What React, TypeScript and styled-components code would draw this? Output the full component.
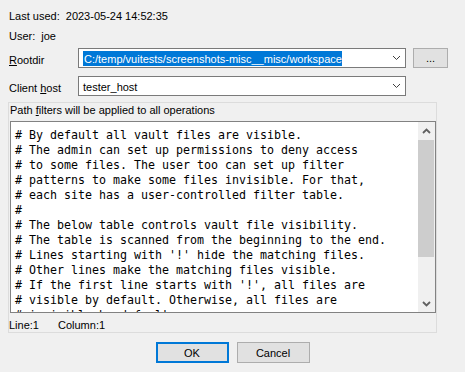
import React from "react";
import styled, { createGlobalStyle } from "styled-components";

const Global = createGlobalStyle`
  html, body { margin: 0; padding: 0; background: #f0f0f0; }
  body { font-family: "Liberation Sans", Arial, sans-serif; font-size: 11px; color: #000; }
`;

const Dialog = styled.div`
  width: 465px;
  height: 372px;
  box-sizing: border-box;
  padding: 6px 0 0 8px;
  display: flex;
  flex-direction: column;
  background: #f0f0f0;
`;

const InfoRow = styled.div`
  height: 20px;
  line-height: 20px;
  padding-left: 1px;
  display: flex;
  gap: 6px;
  white-space: nowrap;
`;

const FieldRow = styled.div<{ $mt: number }>`
  margin-top: ${(p) => p.$mt}px;
  height: 20px;
  display: flex;
  align-items: center;
`;

const FieldLabel = styled.label`
  width: 70px;
  padding-left: 1px;
  line-height: 20px;
  padding-top: 2px;
  box-sizing: border-box;
  height: 20px;
  white-space: nowrap;
`;

const U = styled.span`
  text-decoration: underline;
  text-underline-offset: 1px;
`;

const Combo = styled.div`
  width: 328px;
  height: 20px;
  box-sizing: border-box;
  border: 1px solid #7a7a7a;
  background: #fff;
  display: flex;
  align-items: center;
  padding-left: 4px;
  position: relative;
`;

const ComboText = styled.span<{ $selected?: boolean }>`
  line-height: 15px;
  height: 15px;
  padding-top: 1px;
  box-sizing: border-box;
  display: inline-block;
  white-space: nowrap;
  background: ${(p) => (p.$selected ? "#0078d7" : "transparent")};
  color: ${(p) => (p.$selected ? "#fff" : "#000")};
  padding-left: ${(p) => (p.$selected ? "1px" : "0")};
`;

const ComboArrow = styled.span`
  margin-left: auto;
  width: 17px;
  display: flex;
  align-items: center;
  justify-content: center;
  height: 100%;
`;

const SmallButton = styled.button`
  margin-left: 7px;
  width: 35px;
  height: 20px;
  box-sizing: border-box;
  border: 1px solid #adadad;
  background: #e1e1e1;
  font-family: inherit;
  font-size: 11px;
  padding: 0;
  color: #000;
  line-height: 18px;
`;

const Panel = styled.div`
  margin-top: 6px;
  width: 429px;
  height: 231px;
  box-sizing: border-box;
  border: 1px solid #dcdcdc;
  display: flex;
  flex-direction: column;
`;

const PanelLabel = styled.div`
  height: 18px;
  line-height: 15px;
  padding: 0 0 3px 1px;
  box-sizing: border-box;
  white-space: nowrap;
`;

const Editor = styled.div`
  margin-left: 1px;
  height: 192px;
  flex: none;
  box-sizing: border-box;
  border: 1px solid #828282;
  background: #fff;
  display: flex;
  overflow: hidden;
`;

const Code = styled.pre`
  margin: 0;
  flex: 1;
  padding: 5.5px 0 0 4px;
  font-family: "DejaVu Sans Mono", "Liberation Mono", monospace;
  font-size: 11.63px;
  line-height: 15px;
  color: #000;
  overflow: hidden;
  white-space: pre;
`;

const ScrollBar = styled.div`
  width: 17px;
  background: #f0f0f0;
  display: flex;
  flex-direction: column;
`;

const ScrollArrow = styled.div`
  height: 17px;
  display: flex;
  align-items: center;
  justify-content: center;
`;

const ScrollTrack = styled.div`
  flex: 1;
  display: flex;
  flex-direction: column;
  padding: 1px 1px 0 0;
`;

const Thumb = styled.div`
  height: 117px;
  background: #cdcdcd;
`;

const StatusBar = styled.div`
  height: 19px;
  padding: 6px 0 0 0;
  box-sizing: border-box;
  line-height: 13px;
  display: flex;
  white-space: nowrap;
`;

const StatusCell = styled.span<{ $w: number }>`
  width: ${(p) => p.$w}px;
`;

const ButtonRow = styled.div`
  margin-top: 9px;
  margin-left: -8px;
  display: flex;
  justify-content: center;
  gap: 8px;
`;

const DialogButton = styled.button<{ $default?: boolean }>`
  width: 73px;
  height: 21px;
  box-sizing: border-box;
  border: ${(p) => (p.$default ? "2px solid #0078d7" : "1px solid #adadad")};
  background: #e1e1e1;
  font-family: inherit;
  font-size: 11px;
  color: #000;
  padding: 0;
`;

const Chevron = ({ bold }: { bold?: boolean }) => (
  <svg width="9" height="6" viewBox="0 0 9 6">
    <polyline
      points="1,1 4.5,4.5 8,1"
      fill="none"
      stroke={bold ? "#606060" : "#404040"}
      strokeWidth={bold ? 1.8 : 1}
    />
  </svg>
);

const ChevronUp = () => (
  <svg width="9" height="6" viewBox="0 0 9 6">
    <polyline points="1,5 4.5,1.5 8,5" fill="none" stroke="#606060" strokeWidth={1.8} />
  </svg>
);

const lines = [
  "# By default all vault files are visible.",
  "# The admin can set up permissions to deny access",
  "# to some files. The user too can set up filter",
  "# patterns to make some files invisible. For that,",
  "# each site has a user-controlled filter table.",
  "#",
  "# The below table controls vault file visibility.",
  "# The table is scanned from the beginning to the end.",
  "# Lines starting with '!' hide the matching files.",
  "# Other lines make the matching files visible.",
  "# If the first line starts with '!', all files are",
  "# visible by default. Otherwise, all files are",
  "# invisible by default.",
];

export default function App() {
  return (
    <>
      <Global />
      <Dialog>
        <InfoRow>
          <span>Last used:</span>
          <span>2023-05-24 14:52:35</span>
        </InfoRow>
        <InfoRow>
          <span>User:</span>
          <span>joe</span>
        </InfoRow>
        <FieldRow $mt={2}>
          <FieldLabel>
            <U>R</U>ootdir
          </FieldLabel>
          <Combo>
            <ComboText $selected>C:/temp/vuitests/screenshots-misc__misc/workspace</ComboText>
            <ComboArrow>
              <Chevron />
            </ComboArrow>
          </Combo>
          <SmallButton>...</SmallButton>
        </FieldRow>
        <FieldRow $mt={8}>
          <FieldLabel>
            Client <U>h</U>ost
          </FieldLabel>
          <Combo>
            <ComboText>tester_host</ComboText>
            <ComboArrow>
              <Chevron />
            </ComboArrow>
          </Combo>
        </FieldRow>
        <Panel>
          <PanelLabel>
            Path <U>f</U>ilters will be applied to all operations
          </PanelLabel>
          <Editor>
            <Code>{lines.join("\n")}</Code>
            <ScrollBar>
              <ScrollArrow>
                <ChevronUp />
              </ScrollArrow>
              <ScrollTrack>
                <Thumb />
              </ScrollTrack>
              <ScrollArrow>
                <Chevron bold />
              </ScrollArrow>
            </ScrollBar>
          </Editor>
          <StatusBar>
            <StatusCell $w={49}>Line:1</StatusCell>
            <StatusCell $w={80}>Column:1</StatusCell>
          </StatusBar>
        </Panel>
        <ButtonRow>
          <DialogButton $default>OK</DialogButton>
          <DialogButton>Cancel</DialogButton>
        </ButtonRow>
      </Dialog>
    </>
  );
}
